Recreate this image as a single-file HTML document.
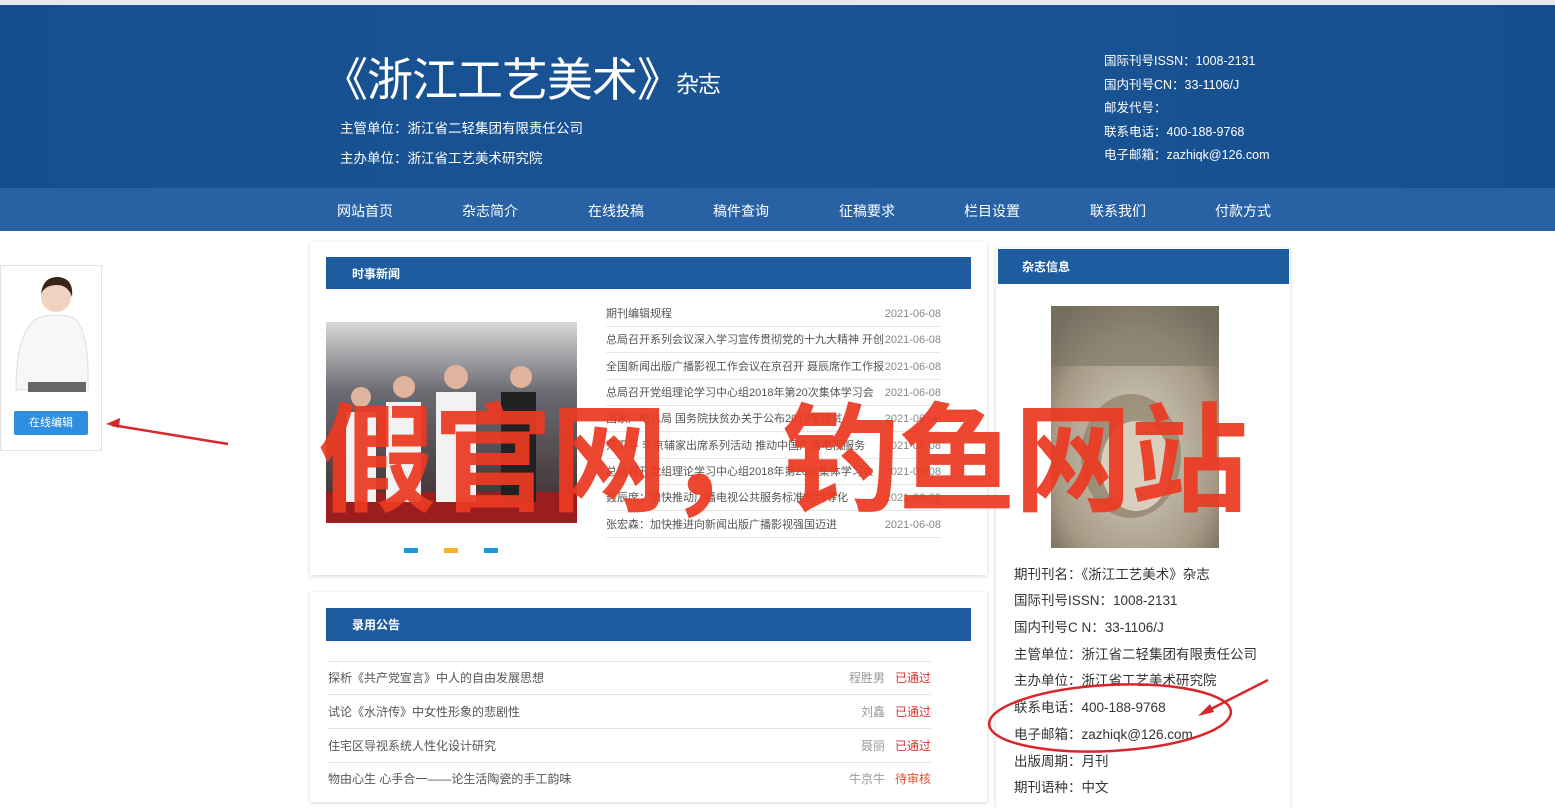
<!DOCTYPE html>
<html><head><meta charset="utf-8"><style>
*{margin:0;padding:0;box-sizing:border-box}
body{width:1555px;height:800px;overflow:hidden;background:#fff;font-family:"Liberation Sans","Noto Sans CJK SC",sans-serif;position:relative;color:#333}
.abs{position:absolute}
.top{left:0;top:0;width:1555px;height:5px;background:#e6e9ee}
.hdr{left:0;top:5px;width:1555px;height:183px;background:linear-gradient(90deg,#174f8e,#1a5495 50%,#174f8e)}
.nav{left:0;top:188px;width:1555px;height:43px;background:#2862a4}
.nav span{position:absolute;top:13px;color:#fff;font-size:14px}
.w{color:#fff}
.card{background:#fff;box-shadow:0 1px 4px rgba(0,0,0,.18)}
.bar{background:#1f5c9f;color:#fff;font-size:12px;font-weight:bold;padding-left:26px}
.li{position:absolute;left:606px;width:335px;font-size:11px;color:#555;border-bottom:1px solid #e6e6e6;height:26px;line-height:26px}
.li b{font-weight:normal;position:absolute;right:0;color:#888}
.ar{position:absolute;left:328px;width:603px;font-size:12px;color:#555;border-bottom:1px solid #e3e3e3;height:34px;line-height:34px}
.ar i{font-style:normal;position:absolute;right:0}
.ar em{font-style:normal;color:#999;position:absolute;right:46px}
.info{position:absolute;left:1014px;font-size:13.5px;color:#333}
</style></head><body>
<div class="abs top"></div>
<div class="abs hdr"></div>
<div class="abs w" style="left:322px;top:44px;font-size:46px;letter-spacing:-1px">《浙江工艺美术》<span style="font-size:23px;position:relative;top:-4px;left:-6px">杂志</span></div>
<div class="abs w" style="left:340px;top:117px;font-size:13.5px">主管单位：浙江省二轻集团有限责任公司</div>
<div class="abs w" style="left:340px;top:147px;font-size:13.5px">主办单位：浙江省工艺美术研究院</div>
<div class="abs w" style="left:1104px;top:50px;font-size:12.5px;line-height:23.5px">国际刊号ISSN：1008-2131<br>国内刊号CN：33-1106/J<br>邮发代号：<br>联系电话：400-188-9768<br>电子邮箱：zazhiqk@126.com</div>
<div class="abs nav">
<span style="left:337px">网站首页</span><span style="left:462px">杂志简介</span><span style="left:588px">在线投稿</span><span style="left:713px">稿件查询</span><span style="left:839px">征稿要求</span><span style="left:964px">栏目设置</span><span style="left:1090px">联系我们</span><span style="left:1215px">付款方式</span></div>

<!-- left widget -->
<div class="abs" style="left:0;top:265px;width:102px;height:186px;border:1px solid #e3e3e3;background:#fff"></div>
<svg class="abs" style="left:8px;top:270px" width="82" height="132"><circle cx="48" cy="27" r="15" fill="#f1d2c0"/><path d="M33 24 q2-18 18-17 q15 2 13 20 q-4-12-15-12 q-12 0-16 9z" fill="#3a2418"/><path d="M8 120 q0-60 22-72 q18-6 36 0 q16 14 14 72z" fill="#f7f7f7" stroke="#ddd"/><rect x="20" y="112" width="58" height="10" fill="#666"/></svg>
<div class="abs" style="left:14px;top:411px;width:74px;height:24px;background:#2f8ee0;color:#fff;font-size:11px;text-align:center;line-height:24px;border-radius:2px">在线编辑</div>

<!-- news card -->
<div class="abs card" style="left:310px;top:242px;width:677px;height:333px"></div>
<div class="abs bar" style="left:326px;top:257px;width:645px;height:32px;line-height:34px">时事新闻</div>
<svg class="abs" style="left:326px;top:322px" width="251" height="201"><defs><linearGradient id="g" x1="0" y1="0" x2="0" y2="1"><stop offset="0" stop-color="#d8d8d8"/><stop offset=".35" stop-color="#6a6a72"/><stop offset="1" stop-color="#3a2a2a"/></linearGradient></defs><rect width="251" height="201" fill="url(#g)"/><rect x="0" y="170" width="251" height="31" fill="#9c1d1d"/><g fill="#f2f2f2"><rect x="20" y="90" width="30" height="90"/><rect x="60" y="80" width="35" height="100"/><rect x="110" y="70" width="40" height="110"/></g><rect x="175" y="70" width="35" height="110" fill="#222"/><g fill="#e0b49c"><circle cx="35" cy="75" r="10"/><circle cx="78" cy="65" r="11"/><circle cx="130" cy="55" r="12"/><circle cx="195" cy="55" r="11"/></g></svg>
<div class="abs" style="left:404px;top:548px;width:14px;height:5px;background:#199bd1"></div>
<div class="abs" style="left:444px;top:548px;width:14px;height:5px;background:#f1b52a"></div>
<div class="abs" style="left:484px;top:548px;width:14px;height:5px;background:#199bd1"></div>
<div class="li" style="top:301px">期刊编辑规程<b>2021-06-08</b></div>
<div class="li" style="top:327px">总局召开系列会议深入学习宣传贯彻党的十九大精神 开创<b>2021-06-08</b></div>
<div class="li" style="top:354px">全国新闻出版广播影视工作会议在京召开 聂辰席作工作报<b>2021-06-08</b></div>
<div class="li" style="top:380px">总局召开党组理论学习中心组2018年第20次集体学习会<b>2021-06-08</b></div>
<div class="li" style="top:406px">国家广电总局 国务院扶贫办关于公布2018年扶贫<b>2021-06-08</b></div>
<div class="li" style="top:433px">范卫平 李京辅家出席系列活动 推动中国广播电视服务<b>2021-06-08</b></div>
<div class="li" style="top:459px">总局召开党组理论学习中心组2018年第20次集体学习会<b>2021-06-08</b></div>
<div class="li" style="top:485px">聂辰席：加快推动广播电视公共服务标准化均等化<b>2021-06-08</b></div>
<div class="li" style="top:512px">张宏森：加快推进向新闻出版广播影视强国迈进<b>2021-06-08</b></div>

<!-- announce card -->
<div class="abs card" style="left:310px;top:592px;width:677px;height:210px"></div>
<div class="abs bar" style="left:326px;top:608px;width:645px;height:33px;line-height:35px">录用公告</div>
<div class="abs" style="left:328px;top:661px;width:603px;border-bottom:1px solid #e3e3e3"></div>
<div class="ar" style="top:661px">探析《共产党宣言》中人的自由发展思想<em>程胜男</em><i style="color:#e03030">已通过</i></div>
<div class="ar" style="top:695px">试论《水浒传》中女性形象的悲剧性<em>刘鑫</em><i style="color:#e03030">已通过</i></div>
<div class="ar" style="top:729px">住宅区导视系统人性化设计研究<em>聂丽</em><i style="color:#e03030">已通过</i></div>
<div class="ar" style="top:762px;border:none">物由心生 心手合一——论生活陶瓷的手工韵味<em>牛京牛</em><i style="color:#e8502a">待审核</i></div>

<!-- right card -->
<div class="abs card" style="left:996px;top:248px;width:294px;height:560px"></div>
<div class="abs bar" style="left:998px;top:249px;width:291px;height:35px;line-height:36px;padding-left:24px">杂志信息</div>
<svg class="abs" style="left:1051px;top:306px" width="168" height="242"><defs><radialGradient id="c" cx=".5" cy=".6" r=".7"><stop offset="0" stop-color="#d9d2c4"/><stop offset=".7" stop-color="#a69a86"/><stop offset="1" stop-color="#6c6254"/></radialGradient></defs><rect width="168" height="242" fill="url(#c)"/><rect width="168" height="60" fill="#7b7565" opacity=".6"/><ellipse cx="80" cy="150" rx="50" ry="62" fill="#8e8068" opacity=".7"/><ellipse cx="85" cy="160" rx="35" ry="45" fill="#d8cfbe"/></svg>
<div class="info" style="top:563px">期刊刊名：《浙江工艺美术》杂志</div>
<div class="info" style="top:589px">国际刊号ISSN：1008-2131</div>
<div class="info" style="top:616px">国内刊号C N：33-1106/J</div>
<div class="info" style="top:643px">主管单位：浙江省二轻集团有限责任公司</div>
<div class="info" style="top:669px">主办单位：浙江省工艺美术研究院</div>
<div class="info" style="top:696px">联系电话：400-188-9768</div>
<div class="info" style="top:723px">电子邮箱：zazhiqk@126.com</div>
<div class="info" style="top:750px">出版周期：月刊</div>
<div class="info" style="top:776px">期刊语种：中文</div>

<!-- annotations -->
<svg class="abs" style="left:0;top:0" width="1555" height="800">
<ellipse cx="1110" cy="718" rx="121" ry="33" fill="none" stroke="#d8272a" stroke-width="2.5" transform="rotate(-3 1110 718)"/>
<line x1="1268" y1="680" x2="1205" y2="712" stroke="#d8272a" stroke-width="2.5"/>
<path d="M1198 716 l12-12 l4 8z" fill="#d8272a"/>
<line x1="228" y1="444" x2="112" y2="425" stroke="#d8272a" stroke-width="2.5"/>
<path d="M106 424 l14-6 l-1 10z" fill="#d8272a"/>
</svg>
<div class="abs" style="left:318px;top:376px;font-size:118px;line-height:150px;color:#ec3a22;font-weight:bold;letter-spacing:-2px;white-space:nowrap;opacity:.93;font-family:'Noto Sans CJK SC',sans-serif">假官网，钓鱼网站</div>
</body></html>
